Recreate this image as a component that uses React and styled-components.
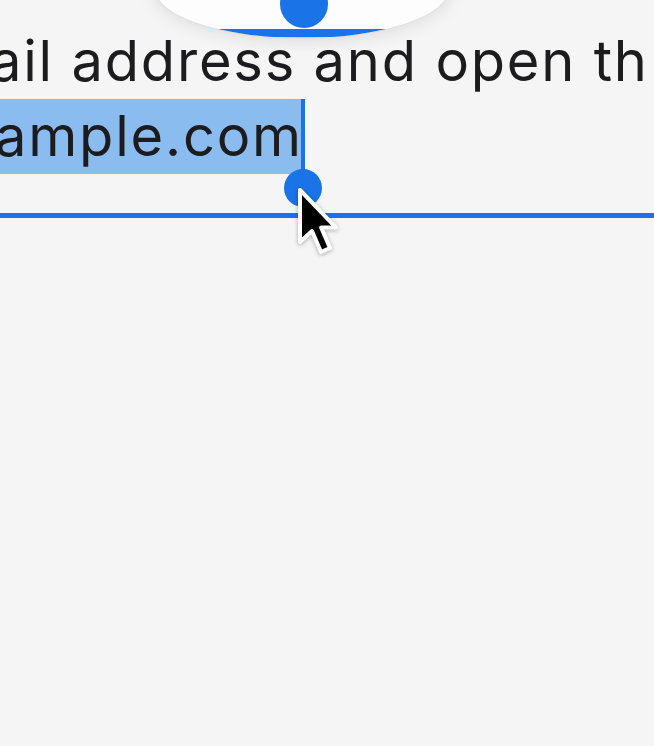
import React from 'react';
import styled, { createGlobalStyle } from 'styled-components';

const GlobalStyle = createGlobalStyle`
  html, body {
    margin: 0;
    padding: 0;
    background: #f5f5f5;
    overflow: hidden;
  }
`;

const Page = styled.div`
  position: relative;
  display: flex;
  flex-direction: column;
  width: 654px;
  height: 746px;
  background: #f5f5f5;
  overflow: hidden;
  font-family: Inter, "Noto Sans", sans-serif;
  color: #1c1c1e;
`;

const Loupe = styled.div`
  position: absolute;
  left: 155px;
  top: -62px;
  width: 294px;
  height: 100px;
  border-radius: 50%;
  background: #fdfdfd;
  box-shadow: 0 0 20px rgba(0, 0, 0, 0.14), 0 0 2px rgba(0, 0, 0, 0.06);
  overflow: hidden;
`;

const LoupeDot = styled.div`
  position: absolute;
  left: 125px;
  top: 42px;
  width: 48px;
  height: 48px;
  border-radius: 50%;
  background: #1a74e8;
`;

const LoupeBar = styled.div`
  position: absolute;
  left: 0;
  right: 0;
  bottom: 1px;
  height: 8px;
  background: #1a74e8;
  box-shadow: 0 1px 1px rgba(120, 180, 250, 0.6);
`;

const TextBlock = styled.div`
  display: flex;
  flex-direction: column;
  padding-top: 24px;
  font-size: 56px;
  line-height: 75px;
  letter-spacing: 1.8px;
  white-space: nowrap;
`;

const Line = styled.div`
  margin-left: ${(p) => p.$shift}px;
`;

const Selected = styled.span`
  position: relative;
  display: inline-block;
  background: #8bbcf0;
`;

const Caret = styled.span`
  position: absolute;
  right: -2px;
  top: 0;
  width: 4px;
  height: 84px;
  background: #1a74e8;
`;

const Handle = styled.span`
  position: absolute;
  right: -19px;
  top: 70px;
  width: 38px;
  height: 38px;
  border-radius: 50%;
  background: #1a74e8;
`;

const Underline = styled.div`
  margin-top: 39px;
  height: 5px;
  background: #1a74e8;
`;

const Pointer = styled.svg`
  position: absolute;
  left: 296px;
  top: 186px;
  width: 44px;
  height: 72px;
  filter: drop-shadow(0 1px 2px rgba(0, 0, 0, 0.3));
`;

export default function App() {
  return (
    <Page>
      <GlobalStyle />
      <TextBlock>
        <Line $shift={-10}>ail address and open th</Line>
        <Line $shift={-5}>
          <Selected>
            ample.com
            <Caret />
            <Handle />
          </Selected>
        </Line>
      </TextBlock>
      <Underline />
      <Loupe>
        <LoupeDot />
        <LoupeBar />
      </Loupe>
      <Pointer viewBox="0 0 22 36">
        <path
          d="M2 2 L2 28 L8 22.5 L12.5 33 L17 31 L12.6 20.8 L20 20.8 Z"
          fill="#000"
          stroke="#fff"
          strokeWidth="2"
          strokeLinejoin="round"
        />
      </Pointer>
    </Page>
  );
}
